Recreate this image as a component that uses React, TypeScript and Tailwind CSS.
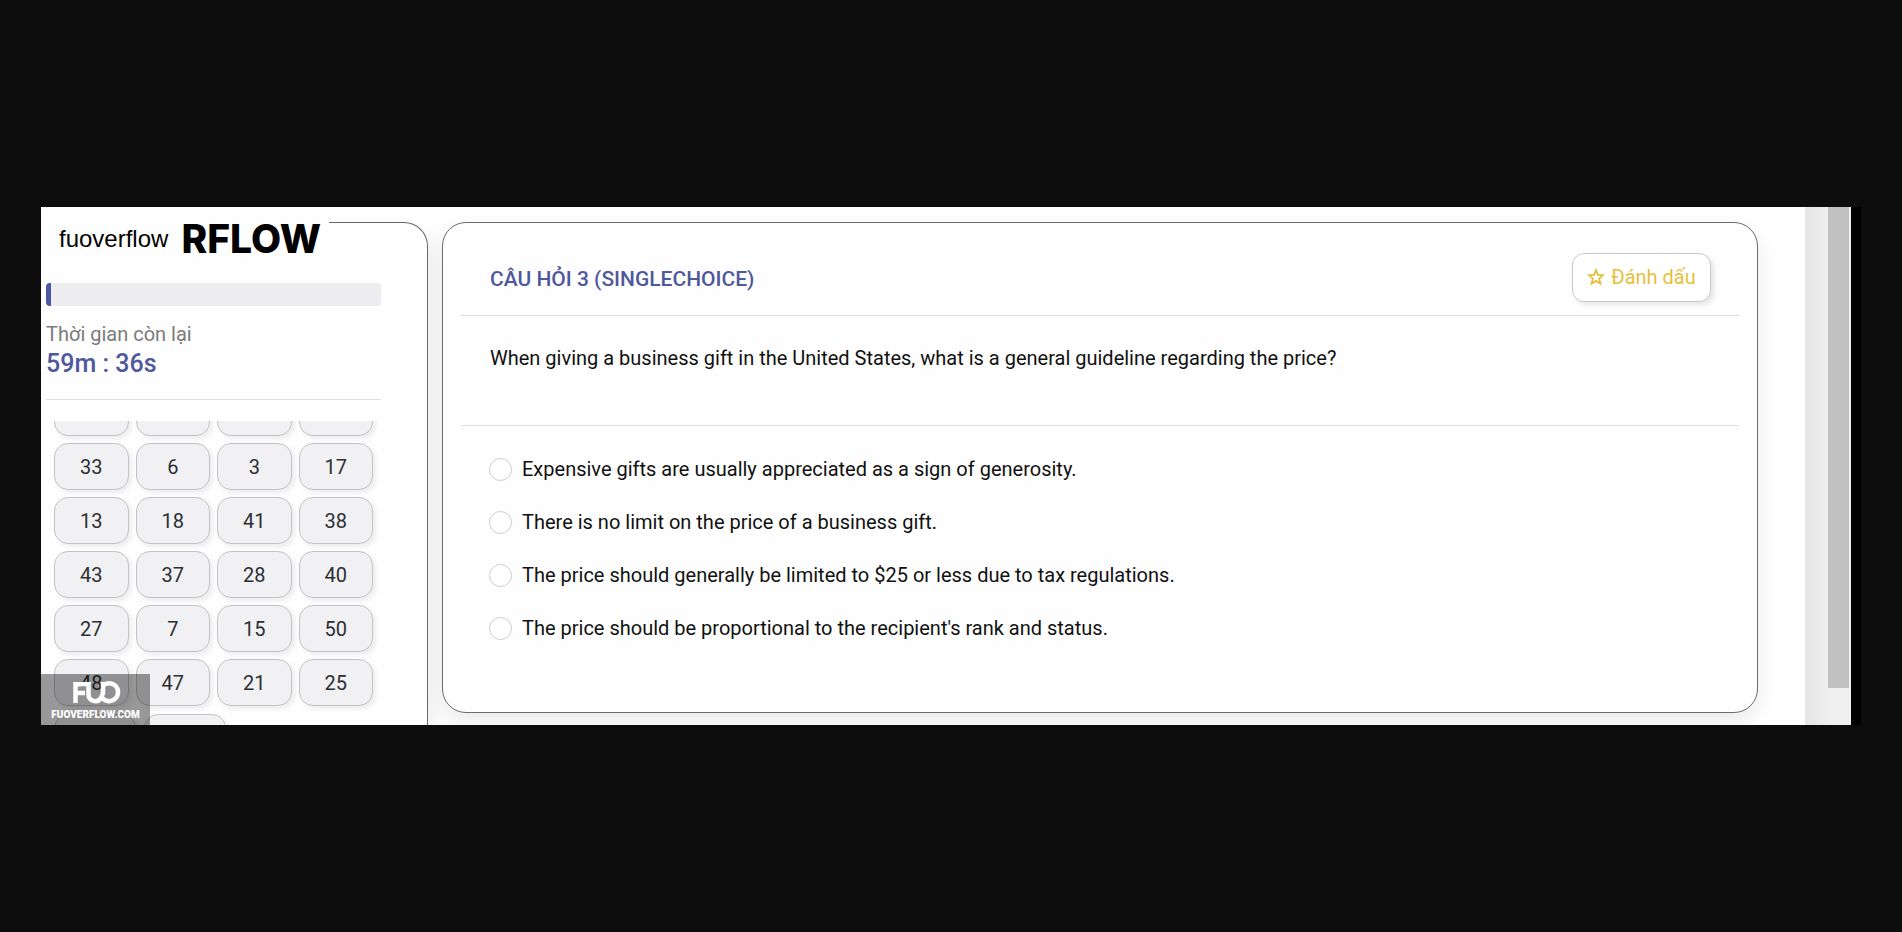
import React from "react";

const questionNumbers = [
  33, 6, 3, 17,
  13, 18, 41, 38,
  43, 37, 28, 40,
  27, 7, 15, 50,
  48, 47, 21, 25,
];

const options = [
  "Expensive gifts are usually appreciated as a sign of generosity.",
  "There is no limit on the price of a business gift.",
  "The price should generally be limited to $25 or less due to tax regulations.",
  "The price should be proportional to the recipient's rank and status.",
];

const tile =
  "block h-[47px] rounded-[14px] border border-[#c3c3c5] bg-[#f1f1f4] text-xl text-[#2c2f33] shadow-[3px_3px_5px_rgba(0,0,0,0.07)]";

function Sidebar() {
  return (
    <aside className="mt-[15px] flex w-[387px] shrink-0 flex-col rounded-tr-3xl border-t border-r border-[#6b6b6b] bg-[#fefefe] pr-[46px] shadow-[4px_8px_20px_rgba(0,0,0,0.08)]">
      <div className="-mt-3 flex h-14 w-72 items-center bg-[#fefefe] pl-[18px] font-['Liberation_Sans',sans-serif] text-2xl text-black">
        <span>fuoverflow</span>
        <span className="ml-[13px] font-[Inter,sans-serif] text-[39px] font-extrabold">RFLOW</span>
      </div>
      <div className="flex min-h-0 flex-[1_1_0px] flex-col pl-[5px]">
        <div
          role="progressbar"
          aria-label="Thời gian còn lại"
          aria-valuenow={1}
          className="mt-4 h-[23px] shrink-0 overflow-hidden rounded bg-[#ededef]"
        >
          <div className="h-full w-[5px] bg-[#4c57a3]" />
        </div>
        <p className="mt-[14px] shrink-0 text-xl leading-7 text-[#7b7b7b]">Thời gian còn lại</p>
        <p className="shrink-0 text-[25px] leading-8 font-medium text-[#4f589c]">59m : 36s</p>
        <hr className="mt-[19px] shrink-0 border-[#dedede]" />
        <nav className="mt-[21px] min-h-0 flex-[1_1_0px] overflow-hidden pr-2 pl-2">
          <div className="-mt-8 grid grid-cols-4 gap-[7px]">
            {[0, 1, 2, 3].map((n) => (
              <span key={n} className={tile} />
            ))}
            {questionNumbers.map((n) => (
              <button key={n} type="button" className={tile}>
                {n}
              </button>
            ))}
          </div>
          <div className="mt-2 flex gap-2">
            <span className={`${tile} w-[82px]`} />
            <span className={`${tile} w-[82px]`} />
          </div>
        </nav>
      </div>
    </aside>
  );
}

function StarIcon() {
  return (
    <svg viewBox="0 0 18 18" className="size-[18px]" fill="none" stroke="currentColor" strokeWidth="1.8" aria-hidden="true">
      <path d="M9 2.2L11 6.9L16 7.3L12.2 10.6L13.4 15.6L9 12.9L4.6 15.6L5.8 10.6L2 7.3L7 6.9Z" />
    </svg>
  );
}

function QuestionCard() {
  return (
    <main className="mt-[15px] mb-3 ml-[14px] min-w-0 flex-1 rounded-3xl border border-[#6b6b6b] bg-[#fefefe] px-[18px] shadow-[0_8px_22px_rgba(0,0,0,0.09)]">
      <header className="flex h-[93px] items-center justify-between border-b border-[#dedede] pt-5 pr-7 pl-[29px]">
        <h1 className="text-[21px] leading-7 font-medium text-[#4f589c]">CÂU HỎI 3 (SINGLECHOICE)</h1>
        <button
          type="button"
          className="mb-1 flex h-[49px] w-[139px] items-center justify-center gap-[6px] rounded-xl border border-[#c9c9c9] bg-white text-xl text-[#e6c03c] shadow-[3px_3px_5px_rgba(0,0,0,0.1)]"
        >
          <StarIcon />
          Đánh dấu
        </button>
      </header>
      <p className="h-[110px] border-b border-[#dedede] pt-7 pl-[29px] text-xl leading-7 text-[#111]">
        When giving a business gift in the United States, what is a general guideline regarding the price?
      </p>
      <div className="flex flex-col gap-[25px] pt-[29px] pb-[70px] pl-7">
        {options.map((text) => (
          <label key={text} className="flex items-center gap-[10px] text-xl leading-7 text-[#111]">
            <input
              type="radio"
              name="answer"
              className="size-[23px] shrink-0 appearance-none rounded-full border border-[#cccccc] bg-white"
            />
            {text}
          </label>
        ))}
      </div>
    </main>
  );
}

function Watermark() {
  return (
    <div className="absolute bottom-0 left-0 flex h-[51px] w-[109px] flex-col items-center bg-black/40 text-white">
      <svg
        viewBox="0 0 109 32"
        className="h-8 w-full shrink-0"
        fill="none"
        stroke="#fff"
        strokeWidth="4.5"
        role="img"
        aria-label="FUO"
      >
        <path d="M34.5 29V10.3H46M34.5 19H44" />
        <path d="M47.5 8V20.5a6.8 6.8 0 0 0 12.5 3.5L62 19V8" />
        <path d="M62 11.5a9 9 0 1 1 -1.5 11.5" />
      </svg>
      <span className="text-[10px] leading-[18px] font-black">FUOVERFLOW.COM</span>
    </div>
  );
}

export default function App() {
  return (
    <div className="flex min-h-screen items-center bg-[#0d0d0d] px-[41px] font-[Roboto,sans-serif]">
      <div className="flex flex-1 bg-black pr-[10px]">
        <div className="relative flex min-w-0 flex-1 overflow-hidden bg-white">
          <Sidebar />
          <QuestionCard />
          <div className="ml-[47px] flex w-[46px] shrink-0 bg-[#f0f0f0]">
            <div className="w-[23px] bg-linear-to-r from-[#e5e5e5] to-[#efeff1]" />
            <div className="mb-[37px] w-[21px] bg-[#c1c1c1]" />
          </div>
          <Watermark />
        </div>
      </div>
    </div>
  );
}
